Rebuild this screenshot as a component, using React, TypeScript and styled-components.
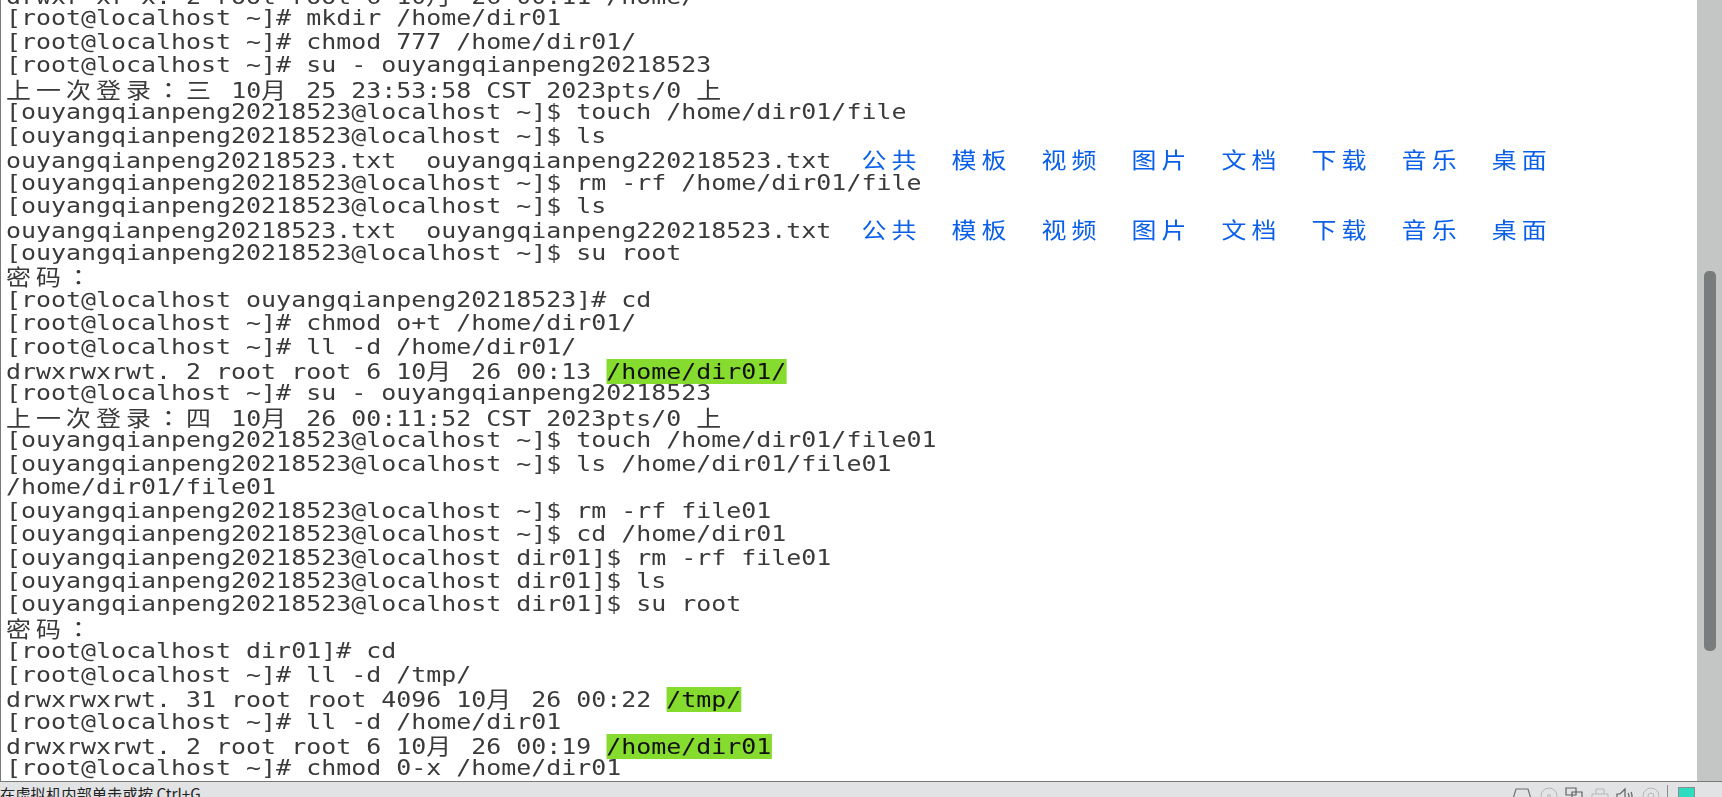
import React from "react";
import styled, { createGlobalStyle } from "styled-components";

const GlobalStyle = createGlobalStyle`
  html, body {
    margin: 0;
    padding: 0;
    height: 100%;
    overflow: hidden;
    background: #e2e3e4;
  }
`;

// 한 줄: 일반 텍스트 / 넓은 글자(CJK) 구분
const splitWide = (line: string) => line.split(/(：|[\u3000-\u9fff]+)/).filter(Boolean);

const folders = ["公共", "模板", "视频", "图片", "文档", "下载", "音乐", "桌面"];
const lsFiles = "ouyangqianpeng20218523.txt  ouyangqianpeng220218523.txt";

type Line = { text: string; mark?: string; folders?: boolean };

const lines: Line[] = [
  { text: "drwxr-xr-x. 2 root root 6 10月 26 00:11 /home/" },
  { text: "[root@localhost ~]# mkdir /home/dir01" },
  { text: "[root@localhost ~]# chmod 777 /home/dir01/" },
  { text: "[root@localhost ~]# su - ouyangqianpeng20218523" },
  { text: "上一次登录：三 10月 25 23:53:58 CST 2023pts/0 上" },
  { text: "[ouyangqianpeng20218523@localhost ~]$ touch /home/dir01/file" },
  { text: "[ouyangqianpeng20218523@localhost ~]$ ls" },
  { text: lsFiles + "  ", folders: true },
  { text: "[ouyangqianpeng20218523@localhost ~]$ rm -rf /home/dir01/file" },
  { text: "[ouyangqianpeng20218523@localhost ~]$ ls" },
  { text: lsFiles + "  ", folders: true },
  { text: "[ouyangqianpeng20218523@localhost ~]$ su root" },
  { text: "密码：" },
  { text: "[root@localhost ouyangqianpeng20218523]# cd" },
  { text: "[root@localhost ~]# chmod o+t /home/dir01/" },
  { text: "[root@localhost ~]# ll -d /home/dir01/" },
  { text: "drwxrwxrwt. 2 root root 6 10月 26 00:13 ", mark: "/home/dir01/" },
  { text: "[root@localhost ~]# su - ouyangqianpeng20218523" },
  { text: "上一次登录：四 10月 26 00:11:52 CST 2023pts/0 上" },
  { text: "[ouyangqianpeng20218523@localhost ~]$ touch /home/dir01/file01" },
  { text: "[ouyangqianpeng20218523@localhost ~]$ ls /home/dir01/file01" },
  { text: "/home/dir01/file01" },
  { text: "[ouyangqianpeng20218523@localhost ~]$ rm -rf file01" },
  { text: "[ouyangqianpeng20218523@localhost ~]$ cd /home/dir01" },
  { text: "[ouyangqianpeng20218523@localhost dir01]$ rm -rf file01" },
  { text: "[ouyangqianpeng20218523@localhost dir01]$ ls" },
  { text: "[ouyangqianpeng20218523@localhost dir01]$ su root" },
  { text: "密码：" },
  { text: "[root@localhost dir01]# cd" },
  { text: "[root@localhost ~]# ll -d /tmp/" },
  { text: "drwxrwxrwt. 31 root root 4096 10月 26 00:22 ", mark: "/tmp/" },
  { text: "[root@localhost ~]# ll -d /home/dir01" },
  { text: "drwxrwxrwt. 2 root root 6 10月 26 00:19 ", mark: "/home/dir01" },
  { text: "[root@localhost ~]# chmod 0-x /home/dir01" },
];

const TermText = ({ text }: { text: string }) => (
  <>
    {splitWide(text).map((part, i) => {
      if (part === "：") return <Colon key={i}>{part}</Colon>;
      if (/[\u3000-\u9fff]/.test(part)) return <Wide key={i}>{part}</Wide>;
      return <span key={i}>{part}</span>;
    })}
  </>
);

const App = () => {
  return (
    <Window>
      <GlobalStyle />
      <Body>
        <Screen>
          <Output>
            {lines.map((line, i) => (
              <Row key={i}>
                <TermText text={line.text} />
                {line.mark && <Mark>{line.mark}</Mark>}
                {line.folders && folders.map((name) => <Folder key={name}>{name}</Folder>)}
              </Row>
            ))}
          </Output>
        </Screen>
        <Scrollbar>
          <Thumb />
        </Scrollbar>
      </Body>
      <StatusBar>
        <Hint>在虚拟机内部单击或按 Ctrl+G</Hint>
        <Devices>
          <svg width="20" height="20" viewBox="0 0 20 20" fill="none" stroke="#6f7173" strokeWidth="1.2">
            <path d="M4 2h12l3 10v8H1v-8z" />
          </svg>
          <svg width="18" height="20" viewBox="0 0 18 20" fill="none" stroke="#b5b7b9" strokeWidth="1">
            <circle cx="9" cy="9" r="8" />
            <circle cx="9" cy="9" r="1.5" />
          </svg>
          <svg width="18" height="20" viewBox="0 0 18 20" fill="none" stroke="#5f6163" strokeWidth="1.2">
            <path d="M1 1h10v7H1zM7 5h10v9H7z" />
          </svg>
          <svg width="18" height="20" viewBox="0 0 18 20" fill="none" stroke="#b5b7b9" strokeWidth="1">
            <path d="M5 7V2h8v5M1 20V7h16v13" />
          </svg>
          <svg width="18" height="20" viewBox="0 0 18 20" fill="none" stroke="#5f6163" strokeWidth="1.2">
            <path d="M1 7h3l5-5v16l-5-5H1zM12 6q2 3 0 6M15 5q2 4 0 8" />
          </svg>
          <svg width="18" height="20" viewBox="0 0 18 20" fill="none" stroke="#b5b7b9" strokeWidth="1">
            <circle cx="9" cy="9" r="8" />
            <circle cx="9" cy="9" r="3" />
          </svg>
          <Divider />
          <Tray />
        </Devices>
      </StatusBar>
    </Window>
  );
};

export default App;

const Window = styled.div`
  display: flex;
  flex-direction: column;
  height: 100vh;
  overflow: hidden;
`;

const Body = styled.div`
  flex: 1;
  min-height: 0;
  display: flex;
  background: #ffffff;
  border-bottom: 1px solid #77797b;
`;

const Screen = styled.div`
  flex: 1;
  min-width: 0;
  overflow: hidden;
  border-left: 1px solid #77797b;
  padding-left: 5px;
`;

const Output = styled.div`
  margin-top: -17px;
  font-family: "DejaVu Sans Mono", "Noto Sans CJK SC", monospace;
  font-size: 22px;
  line-height: 23.44px;
  color: #3a3a3a;
  white-space: pre;
  transform: scaleX(1.133);
  transform-origin: left top;
  filter: blur(0.55px);
`;

const Row = styled.div`
  height: 23.44px;
`;

const Wide = styled.span`
  font-family: "Noto Sans CJK SC", sans-serif;
  letter-spacing: 4.49px;
`;

const Colon = styled(Wide)`
  font-family: "Noto Sans CJK TC", sans-serif;
`;

const Folder = styled.span`
  font-family: "Noto Sans CJK SC", sans-serif;
  color: #0a5fe8;
  letter-spacing: 4.49px;
  margin-right: 26.49px;
`;

const Mark = styled.span`
  background: #86dc2e;
  color: #101010;
`;

const Scrollbar = styled.div`
  width: 25px;
  flex-shrink: 0;
  background: #c4c6c5;
  padding-top: 271px;
  display: flex;
  justify-content: center;
`;

const Thumb = styled.div`
  width: 12px;
  height: 380px;
  border-radius: 5px;
  background: #797c7c;
`;

const StatusBar = styled.div`
  height: 15px;
  display: flex;
  justify-content: space-between;
  background: #e2e3e4;
  overflow: hidden;
`;

const Hint = styled.span`
  font-family: "Noto Sans CJK SC", "Liberation Sans", sans-serif;
  font-size: 15.3px;
  line-height: 22px;
  color: #222222;
  white-space: nowrap;
`;

const Devices = styled.div`
  display: flex;
  align-items: flex-start;
  gap: 7.5px;
  padding-top: 5px;
  margin-right: 27px;
`;

const Divider = styled.div`
  width: 1px;
  height: 14px;
  margin-top: -2px;
  background: #8a8c8e;
`;

const Tray = styled.div`
  width: 17px;
  height: 17px;
  margin-left: 2.5px;
  background: #2fdcc0;
  border: 1px solid #8a8c8e;
  box-sizing: border-box;
`;
